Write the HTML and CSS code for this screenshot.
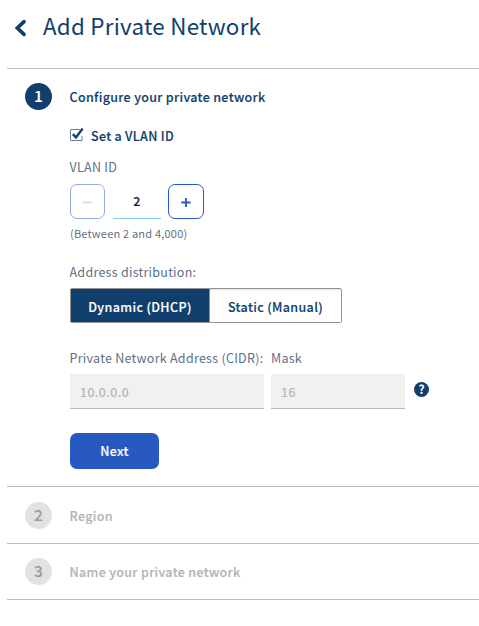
FILE: index.html
```html
<!DOCTYPE html>
<html lang="en">
<head>
<meta charset="utf-8">
<title>Add Private Network</title>
<link rel="stylesheet" href="styles.css">
</head>
<body>
<main class="page">
  <header class="header">
    <svg class="back" viewBox="0 0 14 20" width="14" height="20"><path d="M11 3.6 4.3 10l6.7 6.4" fill="none" stroke="currentColor" stroke-width="3.6" stroke-linecap="round"/></svg>
    <h1 class="title">Add Private Network</h1>
  </header>
  <section class="step step-active">
    <span class="badge">1</span>
    <div class="content">
      <h2 class="step-title">Configure your private network</h2>
      <label class="check">
        <svg viewBox="0 0 15 15" width="15" height="15"><path d="M12 8v4.5H.5v-11H10" fill="none" stroke="#6080a0"/><path d="m2.8 6.1 3.2 3.3 6.6-8.8" fill="none" stroke="currentColor" stroke-width="2.4"/></svg>
        <span>Set a VLAN ID</span>
      </label>
      <div class="label vlan-label">VLAN ID</div>
      <div class="stepper">
        <button class="step-btn minus" aria-label="Decrease"><svg viewBox="0 0 12 12" width="12" height="12"><path d="M1 6.5h9.5" stroke="currentColor" stroke-width="1.7"/></svg></button>
        <span class="value">2</span>
        <button class="step-btn" aria-label="Increase"><svg viewBox="0 0 12 12" width="12" height="12"><path d="M1.2 6.5h9.4M6 1.9v9.2" stroke="currentColor" stroke-width="1.8"/></svg></button>
      </div>
      <div class="hint">(Between 2 and 4,000)</div>
      <div class="label dist-label">Address distribution:</div>
      <div class="toggle">
        <button class="option selected">Dynamic (DHCP)</button>
        <button class="option">Static (Manual)</button>
      </div>
      <div class="fields">
        <div class="field address"><div class="label">Private Network Address (CIDR):</div><div class="input">10.0.0.0</div></div>
        <div class="field mask"><div class="label">Mask</div><div class="input">16</div></div>
        <span class="help">?</span>
      </div>
      <button class="next">Next</button>
    </div>
  </section>
  <section class="step step-disabled">
    <span class="badge">2</span>
    <h2 class="step-title">Region</h2>
  </section>
  <section class="step step-disabled last">
    <span class="badge">3</span>
    <h2 class="step-title">Name your private network</h2>
  </section>
</main>
</body>
</html>
```
FILE: styles.css
```css
* { box-sizing: border-box; }
body {
  margin: 0;
  background: #fff;
  color: #113f6d;
  font: 12.5px/20px "Noto Sans CJK SC", "Noto Sans", sans-serif;
  letter-spacing: 0.27px;
}
button { font: inherit; letter-spacing: inherit; padding: 0; margin: 0; }
svg { display: block; flex: none; }
.page { margin-left: 7px; height: 626px; overflow: hidden; }
.header { display: flex; height: 68px; padding: 8px 0 0 6px; }
.back { margin-top: 10px; }
.title { margin: 0 0 0 16px; font-size: 22.4px; line-height: 34px; font-weight: 400; letter-spacing: 0.24px; white-space: nowrap; }
.step { display: flex; border-top: 1px solid #bdbdbd; padding-left: 18px; }
.step-title, .check, .value, .option, .next, .badge { font-weight: 500; -webkit-text-stroke: 0.15px currentColor; }
.badge {
  flex: none; width: 27px; height: 27px; margin-top: 14px; border-radius: 50%;
  background: #113f6d; color: #fff; text-align: center;
  font-size: 15.5px; line-height: 25px; letter-spacing: 0;
}
.step-active { height: 418px; }
.content { margin-left: 18px; }
.step-title { margin: 0; font-size: 12.5px; line-height: 20px; letter-spacing: 0.33px; text-indent: -0.5px; white-space: nowrap; }
.content .step-title { margin-top: 18px; }
.check { display: flex; height: 20px; margin-top: 19px; gap: 6px; letter-spacing: 0.3px; }
.check svg { margin-top: 2px; }
.label { color: #5f6f85; white-space: nowrap; height: 20px; text-indent: -0.5px; }
.mask .label { text-indent: 0; }
.vlan-label { margin-top: 11px; }
.stepper { display: flex; gap: 8px; margin-top: 7px; height: 35px; }
.step-btn {
  display: flex; align-items: center; justify-content: center;
  width: 35px; height: 35px; border: 1px solid #2859c0; border-radius: 7px;
  background: #fff; color: #2859c0;
}
.step-btn:last-child { width: 36px; margin-left: -1px; }
.minus { border-color: #93ace0; color: #d9d9d9; }
.value { width: 48px; border-bottom: 1px solid #83cff7; color: #122844; line-height: 34px; text-align: center; }
.hint { height: 20px; margin-top: 4px; font-size: 11px; line-height: 20px; letter-spacing: 0.2px; color: #5f6f85; }
.dist-label { margin-top: 19px; }
.toggle { display: flex; width: 272px; height: 35px; margin-top: 6px; border: 1px solid #929292; border-radius: 2px; }
.option { border: 0; flex: 1; background: #fff; color: #113f6d; letter-spacing: 0.37px; box-shadow: inset 0 2px 2px -1px #ddd; padding-top: 3px; }
.selected { flex: none; width: 139px; border-right: 1px solid #929292; background: #113f6d; color: #fff; box-shadow: none; }
.fields { display: flex; margin-top: 25px; gap: 7px; }
.address { width: 194px; }
.mask { width: 134px; }
.input { height: 35px; margin-top: 6px; padding-left: 10px; background: #f1f1f1; border-bottom: 1px solid #b8b8b8; color: #b4b4b4; line-height: 36px; letter-spacing: 0.5px; -webkit-text-stroke: 0.2px currentColor; }
.help { width: 15px; height: 15px; margin: 34px 0 0 2px; border-radius: 50%; background: #113f6d; color: #fff; font-size: 12px; line-height: 14px; font-weight: 700; text-align: center; letter-spacing: 0; }
.next { display: block; width: 89px; height: 36px; margin-top: 24px; border: 0; border-radius: 7px; background: #2859c0; color: #fff; }
.step-disabled { height: 57px; color: #b3b3b3; }
.step-disabled .badge { background: #e1e2e3; color: #9b9b9b; line-height: 24px; margin-top: 15px; }
.step-disabled .step-title { margin: 19px 0 0 18px; }
.step-disabled.last { border-bottom: 1px solid #bdbdbd; }
.step-disabled.last .badge { margin-top: 14px; line-height: 25px; }
.step-disabled.last .step-title { margin-top: 18px; }
```
